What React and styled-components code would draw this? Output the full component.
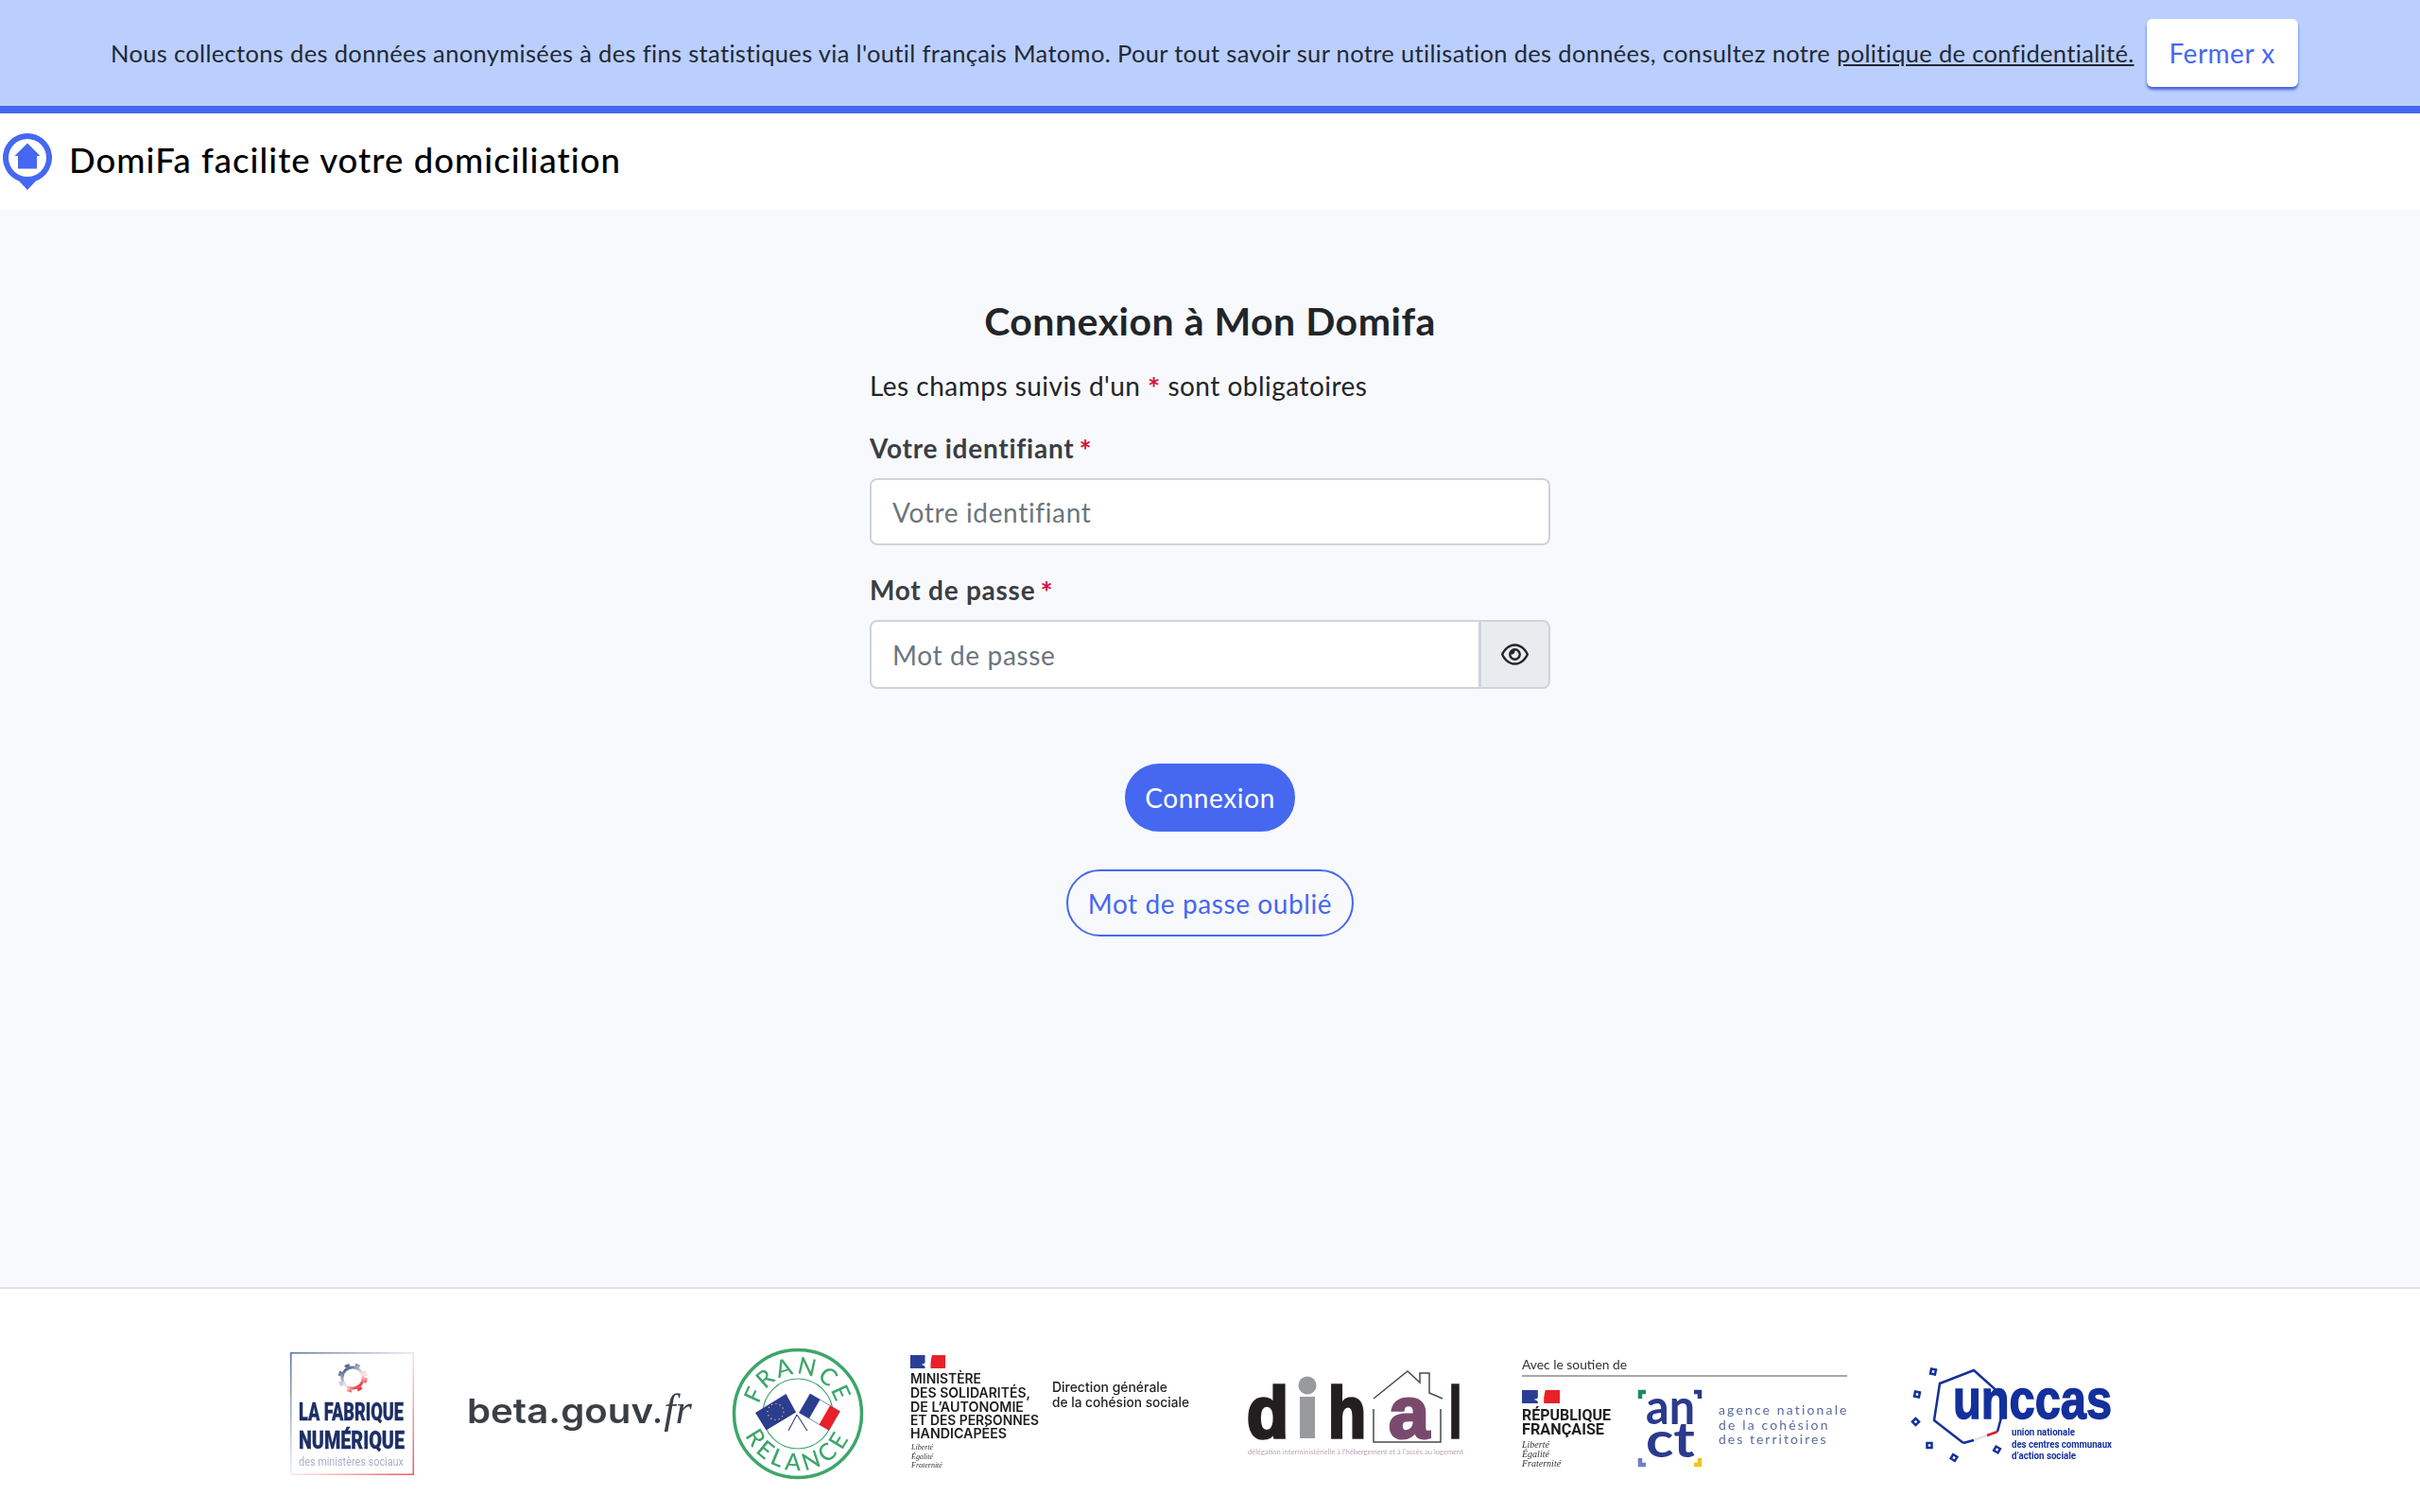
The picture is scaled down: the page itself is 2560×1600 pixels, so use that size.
import React from 'react';
import styled, { createGlobalStyle } from 'styled-components';
import { FaRegEye } from 'react-icons/fa6';

const BLUE = '#4668f0';
const SANS = '"Lato", "Open Sans", sans-serif';

const GlobalStyle = createGlobalStyle`
  * { box-sizing: border-box; }
  html, body { margin: 0; padding: 0; background: #fff; }
  body { font-family: ${SANS}; color: #212529; }
`;

const Page = styled.div`
  width: 2560px;
  height: 1600px;
  display: flex;
  flex-direction: column;
  overflow: hidden;
`;

const Banner = styled.div`
  height: 120px;
  flex: none;
  display: flex;
  align-items: center;
  gap: 13px;
  padding-left: 117px;
  background: #bbcfff;
  border-bottom: 8px solid ${BLUE};
`;

const BannerText = styled.p`
  margin: 0;
  font-size: 25.5px;
  letter-spacing: 0.335px;
  color: #212936;
  white-space: nowrap;
`;

const BannerLink = styled.a`
  color: inherit;
  text-decoration: underline;
`;

const CloseButton = styled.button`
  width: 160px;
  height: 72px;
  border: 0;
  border-radius: 6px;
  background: #fff;
  color: ${BLUE};
  font: 400 28px ${SANS};
  letter-spacing: 0.5px;
  box-shadow: 0 3px 3px rgba(50, 80, 210, 0.85);
`;

const Header = styled.header`
  height: 102px;
  flex: none;
  display: flex;
  align-items: center;
  gap: 18px;
  padding-left: 3px;
  background: #fff;
`;

const BrandTitle = styled.span`
  padding-bottom: 4px;
  font-size: 36.5px;
  font-weight: 500;
  letter-spacing: 1.05px;
  color: #000;
`;

const Main = styled.main`
  flex: 1;
  display: flex;
  flex-direction: column;
  align-items: center;
  padding-top: 90px;
  background: #f8f9fc;
`;

const FormColumn = styled.form`
  width: 720px;
  display: flex;
  flex-direction: column;
`;

const Title = styled.h1`
  margin: 0 0 20px;
  font-size: 41px;
  line-height: 56px;
  font-weight: 700;
  letter-spacing: 0.5px;
  text-align: center;
  color: #212529;
`;

const Hint = styled.p`
  margin: 0 0 26px;
  font-size: 28px;
  line-height: 40px;
  letter-spacing: 0.48px;
`;

const Star = styled.span`
  margin-left: ${(p) => p.$gap || 0}px;
  color: #d6123c;
  font-size: 31px;
  line-height: 20px;
  font-weight: 700;
  vertical-align: -3px;
`;

const Label = styled.label`
  display: block;
  margin-bottom: 12px;
  font-size: 28px;
  line-height: 40px;
  font-weight: 700;
  letter-spacing: 0.75px;
  color: #3b3e44;
`;

const Field = styled.div`
  margin-bottom: 27px;
`;

const InputRow = styled.div`
  display: flex;
`;

const Input = styled.input`
  flex: 1;
  min-width: 0;
  height: ${(p) => p.$h}px;
  padding: 0 22px;
  background: #fff;
  border: 2px solid #ced4da;
  border-radius: ${(p) => (p.$joined ? '8px 0 0 8px' : '8px')};
  font: 400 28px ${SANS};
  letter-spacing: 0.65px;
  color: #212529;
  &::placeholder {
    color: #6c757d;
    opacity: 1;
  }
`;

const EyeAddon = styled.div`
  width: 74px;
  display: flex;
  align-items: center;
  justify-content: center;
  background: #e9ecef;
  border: 2px solid #ced4da;
  border-left-width: 1px;
  border-radius: 0 8px 8px 0;
  color: #212529;
`;

const Actions = styled.div`
  display: flex;
  flex-direction: column;
  align-items: center;
  gap: 40px;
  margin-top: 52px;
`;

const PillButton = styled.button`
  width: ${(p) => p.$w}px;
  height: ${(p) => p.$h}px;
  padding: 0;
  border: 2px solid ${BLUE};
  border-radius: 36px;
  background: ${(p) => (p.$outline ? 'transparent' : BLUE)};
  color: ${(p) => (p.$outline ? BLUE : '#fff')};
  font: 400 28px ${SANS};
  letter-spacing: 0.6px;
`;

const Footer = styled.footer`
  height: 238px;
  flex: none;
  display: flex;
  justify-content: center;
  padding: 63px 17px 0 0;
  background: #fff;
  border-top: 2px solid #dee2e6;
`;

const LogoRow = styled.div`
  display: flex;
  align-items: flex-start;
`;

const Logo = styled.svg`
  display: block;
  flex: none;
  height: 140px;
  width: ${(p) => p.$w}px;
  margin-left: ${(p) => p.$ml || 0}px;
  font-family: ${SANS};
  overflow: visible;
  filter: blur(0.35px);
`;

const PinLogo = () => (
  <svg width="52" height="60" viewBox="0 0 52 60" style={{ flex: 'none' }}>
    <path d="M26 0a26 26 0 0 1 9 50.4L26 60l-9-9.6A26 26 0 0 1 26 0z" fill={BLUE} />
    <circle cx="26" cy="26" r="20" fill="#fff" />
    <path d="M26 10.5 39.500 24H36v13.500H16V24h-3.500z" fill={BLUE} />
  </svg>
);

const FabriqueLogo = () => (
  <Logo $w={131} viewBox="0 0 131 140">
    <defs>
      <linearGradient id="fabTop" x1="0" y1="0" x2="1" y2="0">
        <stop offset="0" stopColor="#5b6f9a" />
        <stop offset="1" stopColor="#e6e9f0" />
      </linearGradient>
      <linearGradient id="fabLeft" x1="0" y1="0" x2="0" y2="1">
        <stop offset="0" stopColor="#5b6f9a" />
        <stop offset="1" stopColor="#eef0f5" />
      </linearGradient>
      <linearGradient id="fabRight" x1="0" y1="0" x2="0" y2="1">
        <stop offset="0" stopColor="#fbe3e5" />
        <stop offset="1" stopColor="#ef5560" />
      </linearGradient>
      <linearGradient id="fabBottom" x1="0" y1="0" x2="1" y2="0">
        <stop offset="0" stopColor="#fdeaea" />
        <stop offset="1" stopColor="#ef5560" />
      </linearGradient>
      <linearGradient id="fabGear" x1="0" y1="0" x2="0.7" y2="1">
        <stop offset="0" stopColor="#27396e" />
        <stop offset="0.5" stopColor="#c9cfdc" />
        <stop offset="0.7" stopColor="#fbe6e6" />
        <stop offset="1" stopColor="#e8323c" />
      </linearGradient>
    </defs>
    <rect x="0" y="4" width="131" height="1.500" fill="url(#fabTop)" />
    <rect x="0" y="4" width="1.500" height="130" fill="url(#fabLeft)" />
    <rect x="129.500" y="4" width="1.500" height="130" fill="url(#fabRight)" />
    <rect x="0" y="132.500" width="131" height="1.500" fill="url(#fabBottom)" />
    <circle cx="66" cy="31" r="11" fill="none" stroke="url(#fabGear)" strokeWidth="3" />
    <circle cx="66" cy="31" r="13.500" fill="none" stroke="url(#fabGear)" strokeWidth="4" strokeDasharray="5 6" />
    <g fontWeight="900" fill="#1c2f66" fontFamily="Roboto, sans-serif" stroke="#1c2f66" strokeWidth="0.3">
      <text x="9" y="76" fontSize="25" textLength="111" lengthAdjust="spacingAndGlyphs">LA FABRIQUE</text>
      <text x="9" y="106" fontSize="26" textLength="112" lengthAdjust="spacingAndGlyphs">NUMÉRIQUE</text>
    </g>
    <text x="9" y="124" fontSize="13" fill="#a9b2c9" textLength="111" lengthAdjust="spacingAndGlyphs" fontFamily="Roboto, sans-serif">des ministères sociaux</text>
  </Logo>
);

const BetaLogo = () => (
  <Logo $w={238} $ml={56} viewBox="0 0 238 140">
    <text x="0" y="79" fontSize="36" fontWeight="600" fill="#3a3f45" textLength="197" lengthAdjust="spacingAndGlyphs" fontFamily="Inter, sans-serif">beta.gouv</text>
    <text x="197" y="79" fontSize="44" fontStyle="italic" fill="#3a3f45" textLength="41" lengthAdjust="spacingAndGlyphs" fontFamily='"Liberation Serif", serif'>.fr</text>
  </Logo>
);

const RelanceLogo = () => (
  <Logo $w={140} $ml={42} viewBox="0 0 140 140">
    <defs>
      <path id="relTop" d="M28 69a42 42 0 0 1 84 0" />
      <path id="relBottom" d="M10 69a60 60 0 0 0 120 0" />
    </defs>
    <circle cx="70" cy="69" r="67.500" fill="none" stroke="#3da66a" strokeWidth="3.500" />
    <circle cx="70" cy="69" r="37" fill="none" stroke="#3da66a" strokeWidth="1.200" />
    <text fontSize="25" fontWeight="500" fill="#3da66a" letterSpacing="2.500" textAnchor="middle">
      <textPath href="#relTop" startOffset="50%">FRANCE</textPath>
    </text>
    <text fontSize="25" fontWeight="500" fill="#3da66a" letterSpacing="4.500" textAnchor="middle">
      <textPath href="#relBottom" startOffset="50%">RELANCE</textPath>
    </text>
    <path d="M60 87 69 70M80 87 69 70" stroke="#3a4a8a" strokeWidth="1.200" fill="none" />
    <polygon points="25,68 57.500,48 68,67.500 36.500,86.500" fill="#2a3d8f" />
    <circle cx="46.500" cy="67" r="8.500" fill="none" stroke="#e5cf5e" strokeWidth="1.200" strokeDasharray="1.200 3.200" />
    <polygon points="71.500,68 83,48 114.500,66.500 103,86.500" fill="#fff" stroke="#2a3d8f" strokeWidth="0.600" />
    <polygon points="71.500,68 83,48 93.500,54 82,74" fill="#2a3d8f" />
    <polygon points="104,60.500 114.500,66.500 103,86.500 92.500,80.500" fill="#e8202a" />
  </Logo>
);

const FlagMark = ({ x, y, w, h }) => (
  <g>
    <rect x={x} y={y} width={w * 0.42} height={h} fill="#2a3f94" />
    <rect x={x + w * 0.58} y={y} width={w * 0.42} height={h} fill="#e8202a" />
    <path d={`M${x + w * 0.32} ${y + h * 0.7}q${w * 0.2} -${h * 0.1} ${w * 0.18} -${h * 0.7}h${w * 0.12}q-${w * 0.04} ${h * 0.6} -${w * 0.1} ${h}z`} fill="#fff" />
  </g>
);

const SolidaritesLogo = () => (
  <Logo $w={295} $ml={49} viewBox="0 0 295 140">
    <FlagMark x={0} y={7} w={37} h={14} />
    <g fontSize="14.500" fontWeight="600" fill="#1d1d1f" fontFamily="Inter, sans-serif">
      <text x="0" y="37" textLength="75" lengthAdjust="spacingAndGlyphs">MINISTÈRE</text>
      <text x="0" y="51.500" textLength="127" lengthAdjust="spacingAndGlyphs">DES SOLIDARITÉS,</text>
      <text x="0" y="66.500" textLength="120" lengthAdjust="spacingAndGlyphs">DE L’AUTONOMIE</text>
      <text x="0" y="80.500" textLength="136" lengthAdjust="spacingAndGlyphs">ET DES PERSONNES</text>
      <text x="0" y="95" textLength="102" lengthAdjust="spacingAndGlyphs">HANDICAPÉES</text>
    </g>
    <g fontSize="8" fontStyle="italic" fill="#333" fontFamily='"Liberation Serif", serif'>
      <text x="1" y="107">Liberté</text>
      <text x="1" y="116.500">Égalité</text>
      <text x="1" y="126">Fraternité</text>
    </g>
    <g fontSize="14.500" fontWeight="500" fill="#222" fontFamily="Inter, sans-serif">
      <text x="150" y="46" textLength="122" lengthAdjust="spacingAndGlyphs">Direction générale</text>
      <text x="150" y="62" textLength="145" lengthAdjust="spacingAndGlyphs">de la cohésion sociale</text>
    </g>
  </Logo>
);

const DihalLogo = () => (
  <Logo $w={230} $ml={60} viewBox="0 0 230 140">
    <g fontFamily='"Liberation Sans", sans-serif' fontWeight="700" fontSize="76" stroke="#231f20" strokeWidth="3.500" fill="#231f20">
      <text x="1" y="94" textLength="44" lengthAdjust="spacingAndGlyphs">d</text>
      <text x="87" y="94" textLength="40" lengthAdjust="spacingAndGlyphs">h</text>
      <text x="215" y="94" textLength="13" lengthAdjust="spacingAndGlyphs">l</text>
    </g>
    <rect x="57" y="51" width="16" height="44" fill="#999a9c" />
    <circle cx="65" cy="39" r="9.500" fill="#999a9c" />
    <text x="151" y="94" textLength="43" lengthAdjust="spacingAndGlyphs" fontFamily='"Liberation Sans", sans-serif' fontWeight="700" fontSize="76" fill="#7a4a6e" stroke="#7a4a6e" strokeWidth="3">a</text>
    <path d="M135 64V99H206V64M135 53 171 24 184 36V26H194V47L208 53" fill="none" stroke="#4b4b4d" strokeWidth="1.500" />
    <text x="2" y="112" fontSize="8" fill="#b9a8b8" textLength="228" lengthAdjust="spacingAndGlyphs">délégation interministérielle à l’hébergement et à l’accès au logement</text>
  </Logo>
);

const AnctLogo = () => (
  <Logo $w={346} $ml={62} viewBox="0 0 346 140">
    <text x="0" y="22" fontSize="14" fill="#333" textLength="111" lengthAdjust="spacingAndGlyphs">Avec le soutien de</text>
    <rect x="0" y="28" width="344" height="2" fill="#a8a8a8" />
    <FlagMark x={0} y={44} w={40} h={14} />
    <g fontSize="17" fontWeight="700" fill="#1d1d1f" fontFamily="Roboto, sans-serif">
      <text x="0" y="76" textLength="94" lengthAdjust="spacingAndGlyphs">RÉPUBLIQUE</text>
      <text x="0" y="91" textLength="87" lengthAdjust="spacingAndGlyphs">FRANÇAISE</text>
    </g>
    <g fontSize="10" fontStyle="italic" fill="#333" fontFamily='"Liberation Serif", serif'>
      <text x="0" y="105">Liberté</text>
      <text x="0" y="115">Égalité</text>
      <text x="0" y="125">Fraternité</text>
    </g>
    <g fontSize="52" fontWeight="700" fill="#2b3a8c" fontFamily="Lato, sans-serif">
      <text x="131" y="80" textLength="52" lengthAdjust="spacingAndGlyphs">an</text>
      <text x="131" y="115" textLength="52" lengthAdjust="spacingAndGlyphs">ct</text>
    </g>
    <g fill="none" strokeWidth="4.500">
      <path d="M131 46h-6v7" stroke="#1b8a6b" />
      <path d="M182 46h6v7" stroke="#2b3a8c" />
      <path d="M125 116v7h6" stroke="#6d7fc4" />
      <path d="M188 116v7h-6" stroke="#f4c21f" />
    </g>
    <g fontSize="14" fill="#5b6b9e" letterSpacing="1.500">
      <text x="208" y="70" textLength="137">agence nationale</text>
      <text x="208" y="86" textLength="117">de la cohésion</text>
      <text x="208" y="101" textLength="115">des territoires</text>
    </g>
  </Logo>
);

const UnccasLogo = () => (
  <Logo $w={216} $ml={64} viewBox="0 0 216 140">
    <polyline points="57,100 26,76 32,37 68,23 96,48 97,73 93,88" fill="none" stroke="#13309c" strokeWidth="2.500" />
    <path d="M68 97 82 92" stroke="#e3e5ee" strokeWidth="2.500" />
    <path d="M82 92 93 88" stroke="#d81e2c" strokeWidth="2.500" />
    <path d="M57 100 68 97" stroke="#13309c" strokeWidth="2.500" />
    <g fill="none" stroke="#13309c" strokeWidth="2.500">
      <rect x="22.500" y="22" width="5" height="5" transform="rotate(12 25 24.500)" />
      <rect x="5.500" y="46" width="5" height="5" transform="rotate(12 8 48.500)" />
      <rect x="4" y="75" width="5" height="5" transform="rotate(45 6.500 77.500)" />
      <rect x="18.500" y="100" width="5" height="5" />
      <rect x="44.500" y="113" width="5" height="5" transform="rotate(30 47 115.500)" />
      <rect x="90" y="104.500" width="5" height="5" transform="rotate(30 92.500 107)" />
    </g>
    <text x="46" y="74" fontSize="60" fontWeight="700" fill="#13309c" stroke="#13309c" strokeWidth="1.500" textLength="168" lengthAdjust="spacingAndGlyphs" fontFamily='"Liberation Sans", sans-serif'>unccas</text>
    <g fontSize="10" fontWeight="700" fill="#13309c" fontFamily="Roboto, sans-serif">
      <text x="108" y="92" textLength="67" lengthAdjust="spacingAndGlyphs">union nationale</text>
      <text x="108" y="105" textLength="106" lengthAdjust="spacingAndGlyphs">des centres communaux</text>
      <text x="108" y="117" textLength="68" lengthAdjust="spacingAndGlyphs">d’action sociale</text>
    </g>
  </Logo>
);

export default function App() {
  return (
    <Page>
      <GlobalStyle />
      <Banner>
        <BannerText>
          Nous collectons des données anonymisées à des fins statistiques via l'outil français Matomo. Pour tout savoir sur notre utilisation des données, consultez notre{' '}
          <BannerLink href="#">politique de confidentialité.</BannerLink>
        </BannerText>
        <CloseButton type="button">Fermer x</CloseButton>
      </Banner>
      <Header>
        <PinLogo />
        <BrandTitle>DomiFa facilite votre domiciliation</BrandTitle>
      </Header>
      <Main>
        <FormColumn onSubmit={(e) => e.preventDefault()}>
          <Title>Connexion à Mon Domifa</Title>
          <Hint>
            Les champs suivis d'un <Star>*</Star> sont obligatoires
          </Hint>
          <Field>
            <Label htmlFor="login">
              Votre identifiant<Star $gap={5}>*</Star>
            </Label>
            <InputRow>
              <Input id="login" $h={71} placeholder="Votre identifiant" />
            </InputRow>
          </Field>
          <Field>
            <Label htmlFor="password">
              Mot de passe<Star $gap={5}>*</Star>
            </Label>
            <InputRow>
              <Input id="password" type="password" $h={73} $joined placeholder="Mot de passe" />
              <EyeAddon>
                <FaRegEye size={29} />
              </EyeAddon>
            </InputRow>
          </Field>
          <Actions>
            <PillButton type="submit" $w={180} $h={72}>Connexion</PillButton>
            <PillButton type="button" $w={304} $h={71} $outline>Mot de passe oublié</PillButton>
          </Actions>
        </FormColumn>
      </Main>
      <Footer>
        <LogoRow>
          <FabriqueLogo />
          <BetaLogo />
          <RelanceLogo />
          <SolidaritesLogo />
          <DihalLogo />
          <AnctLogo />
          <UnccasLogo />
        </LogoRow>
      </Footer>
    </Page>
  );
}
